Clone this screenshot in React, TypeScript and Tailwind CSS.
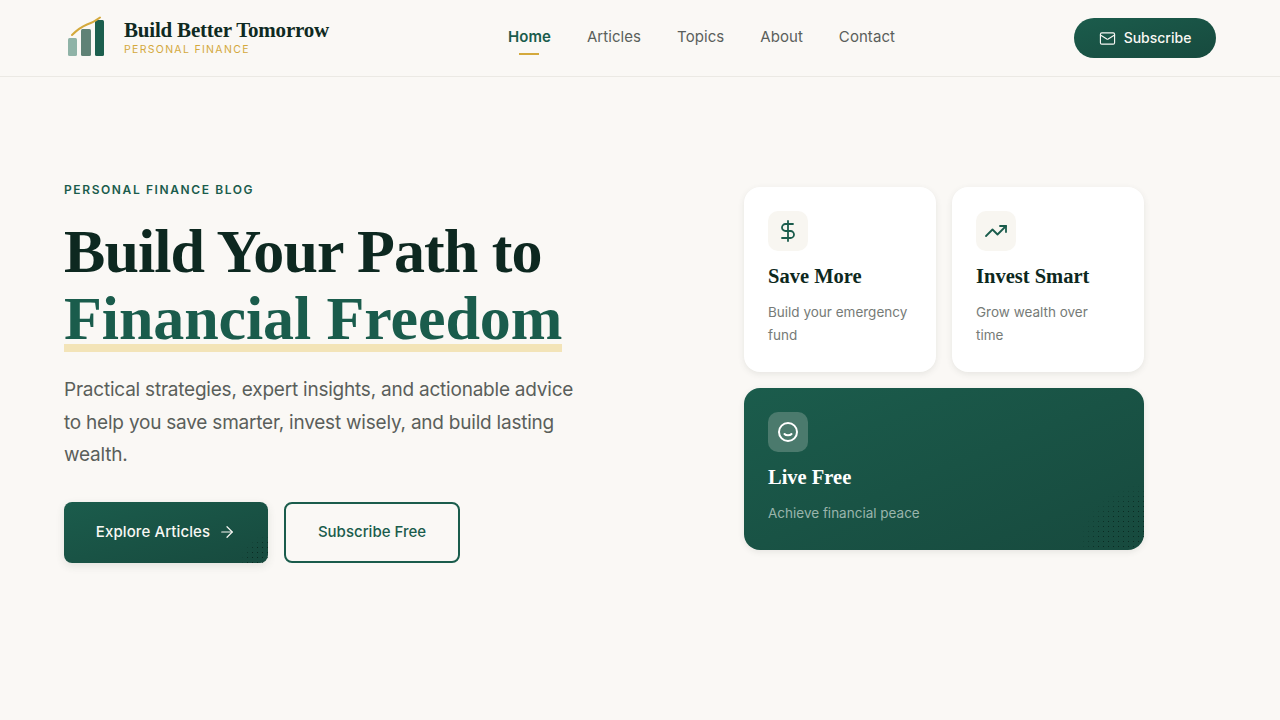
import { ArrowRight, DollarSign, Mail, TrendingUp } from "lucide-react";

const serif = "font-['Liberation_Serif',serif]";

const Logo = () => (
  <svg className="shrink-0" width="44" height="44" viewBox="0 0 44 44" fill="none">
    <rect x="4" y="22" width="9" height="18" rx="1.5" fill="#8fb3a7" />
    <rect x="17" y="13" width="10" height="27" rx="1.5" fill="#5f8276" />
    <rect x="31" y="4" width="9" height="36" rx="1.5" fill="#1c5f4e" />
    <path d="M8 19C13 14 17 11 23 8.5C28 7 32 4.5 36 1.5" stroke="#d4a93c" strokeWidth="2" strokeLinecap="round" />
  </svg>
);

const Smile = () => (
  <svg width="22" height="22" viewBox="0 0 22 22" fill="none" stroke="white" strokeWidth="2" strokeLinecap="round">
    <circle cx="11" cy="11" r="9" />
    <path d="M7.5 13C9 14.8 13 14.8 14.5 13" />
  </svg>
);

const Dots = ({ size }: { size: "sm" | "lg" }) => (
  <div
    className={
      size === "lg"
        ? "absolute right-0 bottom-0 w-[68px] h-[66px] bg-[radial-gradient(#0b2a22_0.6px,transparent_0.8px)] bg-[size:5px_5px] [mask-image:radial-gradient(circle_66px_at_100%_100%,black_70%,transparent_100%)]"
        : "absolute right-0 bottom-0 w-7 h-7 bg-[radial-gradient(#0b2a22_0.6px,transparent_0.8px)] bg-[size:5px_5px] [mask-image:radial-gradient(circle_28px_at_100%_100%,black_70%,transparent_100%)]"
    }
  />
);

const NavLink = ({ label, active }: { label: string; active?: boolean }) => (
  <a className={`relative text-[15px] leading-[22px] tracking-[0.06px] ${active ? "font-semibold text-[#1a5c4c]" : "text-[#5a5f5b]"}`}>
    {label}
    {active && <span className="absolute left-1/2 -translate-x-1/2 -bottom-[7px] w-5 h-0.5 bg-[#d4a93c]" />}
  </a>
);

const Header = () => (
  <header className="flex h-[77px] items-center justify-between border-b border-[#ebe9e4] px-16">
    <div className="flex w-[265px] items-center gap-4">
      <Logo />
      <div className="flex flex-col pb-[2px]">
        <span className={`${serif} text-[21px] leading-[24px] font-bold text-[#0f2a22] tracking-[-0.2px] whitespace-nowrap`}>
          Build Better Tomorrow
        </span>
        <span className="mt-[1px] text-[10.5px] leading-[13px] tracking-[1.32px] text-[#d4a93c]">PERSONAL FINANCE</span>
      </div>
    </div>
    <nav className="mb-[2px] flex items-center gap-9">
      <NavLink label="Home" active />
      <NavLink label="Articles" />
      <NavLink label="Topics" />
      <NavLink label="About" />
      <NavLink label="Contact" />
    </nav>
    <button className="flex h-10 w-[142px] items-center justify-center gap-2 rounded-full bg-gradient-to-br from-[#1b5c4c] to-[#174a3e] text-sm font-medium text-[#f8f7f3]">
      <Mail size={17} strokeWidth={1.6} />
      Subscribe
    </button>
  </header>
);

const Hero = () => (
  <div className="flex flex-col">
    <p className="text-xs leading-4 font-semibold tracking-[1.6px] text-[#1a5c4c]">PERSONAL FINANCE BLOG</p>
    <h1 className={`${serif} mt-[20px] text-[62px] leading-[67px] font-bold text-[#0d2820]`}>
      <span className="tracking-[-0.93px]">Build Your Path to</span>
      <br />
      <span className="mt-[2px] inline-block bg-[linear-gradient(#f3e4b8,#f3e4b8)] bg-[length:100%_8px] bg-bottom bg-no-repeat pb-[2px] leading-[63px] tracking-[-0.1px] text-[#1a5c4c]">
        Financial Freedom
      </span>
    </h1>
    <p className="mt-[22px] w-[520px] text-[19px] leading-[32.5px] tracking-[-0.22px] text-[#5a5f5b]">
      Practical strategies, expert insights, and actionable advice to help you save smarter, invest wisely, and build lasting wealth.
    </p>
    <div className="mt-[30px] flex gap-4">
      <button className="relative flex h-[61px] w-[204px] items-center justify-center gap-2 overflow-hidden rounded-lg bg-gradient-to-br from-[#1b5c4c] to-[#174a3e] text-[15px] font-medium tracking-[0.1px] text-[#f8f7f3] shadow-[0_3px_8px_rgba(60,70,60,0.12)]">
        Explore Articles
        <ArrowRight size={18} strokeWidth={1.6} />
        <Dots size="sm" />
      </button>
      <button className="h-[61px] w-[176px] rounded-lg border-2 border-[#1a5c4c] text-[15px] font-medium text-[#1a5c4c]">
        Subscribe Free
      </button>
    </div>
  </div>
);

const FeatureCard = ({ icon, title, text }: { icon: React.ReactNode; title: string; text: string }) => (
  <div className="h-[185px] rounded-2xl bg-white p-6 shadow-[0_2px_6px_rgba(60,70,60,0.1)]">
    <div className="flex h-10 w-10 items-center justify-center rounded-[10px] bg-[#f8f6f1] text-[#1a5c4c]">{icon}</div>
    <h3 className={`${serif} mt-[11px] text-[20.5px] leading-[28px] font-bold text-[#0d2820]`}>{title}</h3>
    <p className="mt-[11px] w-[141px] text-[13.5px] leading-[23px] text-[#767b77]">{text}</p>
  </div>
);

const Cards = () => (
  <div className="grid w-[400px] grid-cols-2 gap-4 self-start pt-[5px]">
    <FeatureCard icon={<DollarSign size={24} strokeWidth={1.8} />} title="Save More" text="Build your emergency fund" />
    <FeatureCard icon={<TrendingUp size={24} strokeWidth={1.8} />} title="Invest Smart" text="Grow wealth over time" />
    <div className="relative col-span-2 h-[162px] overflow-hidden rounded-2xl bg-gradient-to-br from-[#1b5c4c] to-[#174a3e] p-6 shadow-[0_2px_6px_rgba(60,70,60,0.1)]">
      <div className="flex h-10 w-10 items-center justify-center rounded-[10px] bg-[#4b7a6d]">
        <Smile />
      </div>
      <h3 className={`${serif} mt-[11px] text-[20.5px] leading-[28px] font-bold text-white`}>Live Free</h3>
      <p className="mt-[11px] text-[13.5px] leading-[23px] text-[#9ab5ac]">Achieve financial peace</p>
      <Dots size="lg" />
    </div>
  </div>
);

export default function App() {
  return (
    <div className="min-h-[720px] bg-[#faf8f5] font-['Inter',sans-serif]">
      <Header />
      <main className="grid grid-cols-[680px_400px] px-16 pt-[105px]">
        <Hero />
        <Cards />
      </main>
    </div>
  );
}
